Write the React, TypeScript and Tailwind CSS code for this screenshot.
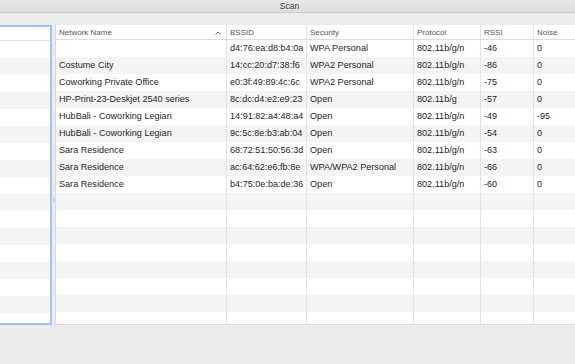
import React from "react";

type Network = {
  name: string;
  bssid: string;
  security: string;
  protocol: string;
  rssi: string;
  noise: string;
};

const networks: Network[] = [
  { name: "", bssid: "d4:76:ea:d8:b4:0a", security: "WPA Personal", protocol: "802.11b/g/n", rssi: "-46", noise: "0" },
  { name: "Costume City", bssid: "14:cc:20:d7:38:f6", security: "WPA2 Personal", protocol: "802.11b/g/n", rssi: "-86", noise: "0" },
  { name: "Coworking Private Office", bssid: "e0:3f:49:89:4c:6c", security: "WPA2 Personal", protocol: "802.11b/g/n", rssi: "-75", noise: "0" },
  { name: "HP-Print-23-Deskjet 2540 series", bssid: "8c:dc:d4:e2:e9:23", security: "Open", protocol: "802.11b/g", rssi: "-57", noise: "0" },
  { name: "HubBali - Coworking Legian", bssid: "14:91:82:a4:48:a4", security: "Open", protocol: "802.11b/g/n", rssi: "-49", noise: "-95" },
  { name: "HubBali - Coworking Legian", bssid: "9c:5c:8e:b3:ab:04", security: "Open", protocol: "802.11b/g/n", rssi: "-54", noise: "0" },
  { name: "Sara Residence", bssid: "68:72:51:50:56:3d", security: "Open", protocol: "802.11b/g/n", rssi: "-63", noise: "0" },
  { name: "Sara Residence", bssid: "ac:64:62:e6:fb:8e", security: "WPA/WPA2 Personal", protocol: "802.11b/g/n", rssi: "-66", noise: "0" },
  { name: "Sara Residence", bssid: "b4:75:0e:ba:de:36", security: "Open", protocol: "802.11b/g/n", rssi: "-60", noise: "0" },
];

const TOTAL_ROWS = 17;

function Cell({ w, children }: { w: string; children?: React.ReactNode }) {
  return (
    <div className={`${w} shrink-0 h-full border-r border-[#e3e3e3] pl-[3px] flex items-center whitespace-nowrap overflow-hidden`}>
      {children}
    </div>
  );
}

function HeadCell({ w, children, sort }: { w: string; children?: React.ReactNode; sort?: boolean }) {
  return (
    <div className={`${w} shrink-0 h-full border-r border-[#e3e3e3] pl-[3px] pr-[4px] pt-[2px] flex items-center justify-between whitespace-nowrap`}>
      <span>{children}</span>
      {sort && (
        <svg width="6" height="4" viewBox="0 0 6 4" className="mr-[1px]">
          <path d="M0.5 3.5 L3 1 L5.5 3.5" fill="none" stroke="#666" strokeWidth="1" />
        </svg>
      )}
    </div>
  );
}

export default function App() {
  const rows = Array.from({ length: TOTAL_ROWS }, (_, i) => networks[i]);

  return (
    <div
      className="w-[575px] h-[364px] bg-[#ececec] flex flex-col overflow-hidden select-none"
      style={{ fontFamily: '"Liberation Sans", Arial, sans-serif' }}
    >
      {/* title bar */}
      <div className="h-[13px] shrink-0 bg-gradient-to-b from-[#e8e8e8] to-[#dedede] border-b border-[#cbcbcb] flex items-center justify-center">
        <span className="text-[8.5px] text-[#3a3a3a] leading-none ml-[4px] mt-[1px]">Scan</span>
      </div>
      <div className="h-[12px] shrink-0" />

      {/* main split view */}
      <div className="flex h-[300px] shrink-0">
        {/* sidebar list */}
        <div className="w-[52px] shrink-0 h-full border-[2px] border-l-0 border-[#9ec5f2] bg-white overflow-hidden">
          <div className="h-[14px] border-b border-[#e3e3e3]" />
          {Array.from({ length: TOTAL_ROWS }, (_, i) => (
            <div key={i} className={`h-[17px] ${i % 2 === 1 ? "bg-[#f4f4f4]" : "bg-white"}`} />
          ))}
        </div>

        {/* divider */}
        <div className="w-[3px] shrink-0 flex items-center justify-center">
          <div className="w-[2px] h-[4px] bg-[#cfcfcf] rounded-[1px] mt-[50px]" />
        </div>

        {/* table */}
        <div className="flex-1 min-w-0 h-[300px] bg-white border-l border-b border-[#d9d9d9] overflow-hidden text-[9.1px] text-[#1e1e1e]">
          <div className="flex h-[15px] border-b border-[#dcdcdc] text-[8px] text-[#555]">
            <HeadCell w="w-[171px]" sort>Network Name</HeadCell>
            <HeadCell w="w-[80px]">BSSID</HeadCell>
            <HeadCell w="w-[107px]">Security</HeadCell>
            <HeadCell w="w-[67px]">Protocol</HeadCell>
            <HeadCell w="w-[53px]">RSSI</HeadCell>
            <HeadCell w="w-[80px]">Noise</HeadCell>
          </div>
          {rows.map((n, i) => (
            <div key={i} className={`flex h-[17px] ${i % 2 === 1 ? "bg-[#f4f4f4]" : "bg-white"}`}>
              <Cell w="w-[171px]">{n?.name}</Cell>
              <Cell w="w-[80px]">{n?.bssid}</Cell>
              <Cell w="w-[107px]">{n?.security}</Cell>
              <Cell w="w-[67px]">{n?.protocol}</Cell>
              <Cell w="w-[53px]">{n?.rssi}</Cell>
              <Cell w="w-[80px]">{n?.noise}</Cell>
            </div>
          ))}
        </div>
      </div>

      {/* bottom bar */}
      <div className="flex-1 bg-[#ebebeb]" />
    </div>
  );
}
